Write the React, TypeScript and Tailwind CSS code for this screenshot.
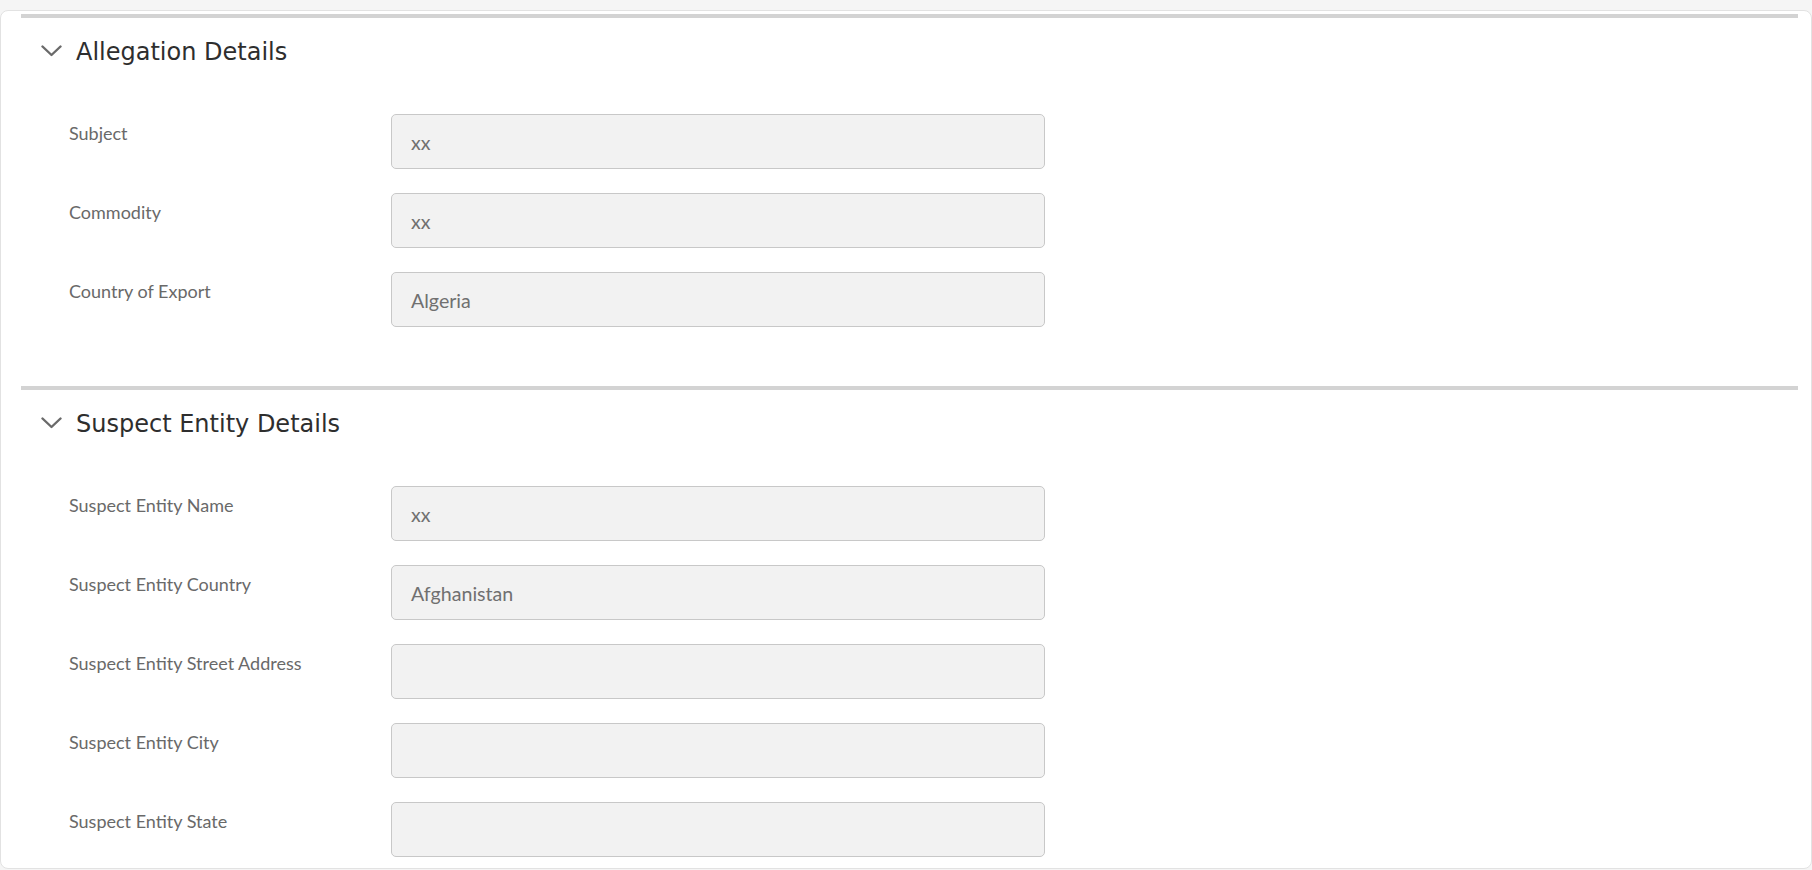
import React from "react";

type Field = { label: string; value: string };

const allegation: Field[] = [
  { label: "Subject", value: "xx" },
  { label: "Commodity", value: "xx" },
  { label: "Country of Export", value: "Algeria" },
];

const suspect: Field[] = [
  { label: "Suspect Entity Name", value: "xx" },
  { label: "Suspect Entity Country", value: "Afghanistan" },
  { label: "Suspect Entity Street Address", value: "" },
  { label: "Suspect Entity City", value: "" },
  { label: "Suspect Entity State", value: "" },
];

function Chevron() {
  return (
    <svg width="21" height="12" viewBox="0 0 21 12" fill="none" className="shrink-0">
      <polyline points="1.5,1.5 10.5,10 19.5,1.5" stroke="#6a6a6a" strokeWidth="2.4" strokeLinecap="round" strokeLinejoin="round" />
    </svg>
  );
}

function Section({ title, fields }: { title: string; fields: Field[] }) {
  return (
    <section>
      <div className="h-[4px] bg-[#d3d3d3]" />
      <div className="h-[66px] flex items-center pl-[20px] gap-[14px]">
        <Chevron />
        <h2 className="mt-[2px] text-[24px] font-normal text-[#2e2e2e] font-['DejaVu_Sans',sans-serif]">{title}</h2>
      </div>
      <div className="pt-[30px] pb-[59px] pl-[48px] flex flex-col gap-[24px]">
        {fields.map((f) => (
          <div key={f.label} className="flex items-start">
            <div className="w-[322px] pt-[7px] text-[18px] leading-[24px] text-[#696969]">{f.label}</div>
            <div className="w-[654px] h-[55px] rounded-[5px] border border-[#c8c8c8] bg-[#f2f2f2] flex items-center pl-[19px] pt-[3px] text-[19.6px] text-[#707070]">
              {f.value}
            </div>
          </div>
        ))}
      </div>
    </section>
  );
}

export default function App() {
  return (
    <div className="h-[870px] overflow-hidden bg-[#f5f5f5] pt-[10px] font-['Lato',sans-serif]">
      <div className="h-[859px] overflow-hidden bg-white border border-[#e2e2e2] rounded-[8px] pl-[20px] pr-[13px] pt-[3px]">
        <Section title="Allegation Details" fields={allegation} />
        <Section title="Suspect Entity Details" fields={suspect} />
      </div>
    </div>
  );
}
